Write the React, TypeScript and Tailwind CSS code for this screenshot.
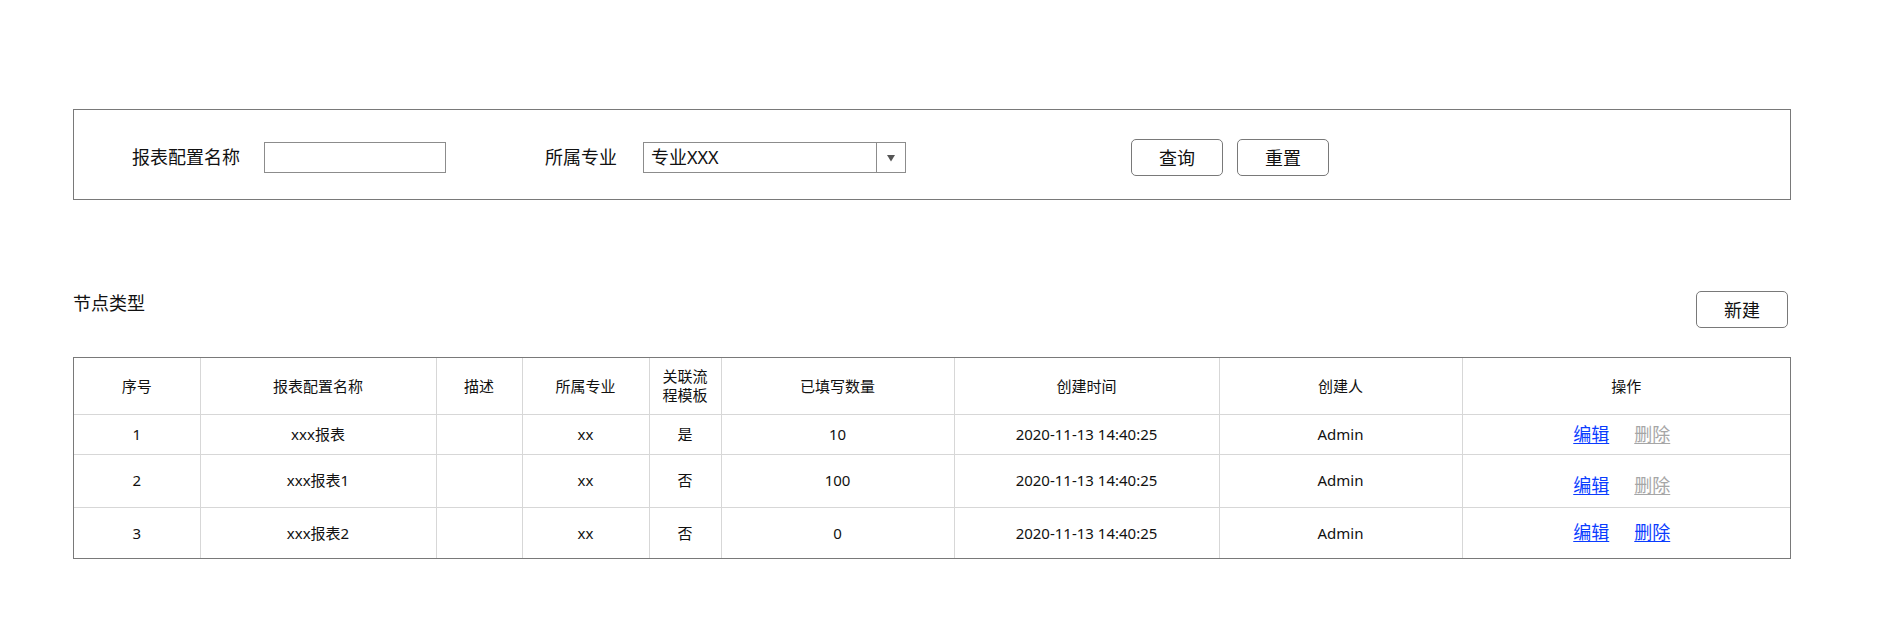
import React from 'react';

type Row = {
  no: number;
  name: string;
  desc: string;
  major: string;
  linked: string;
  filled: number;
  createdAt: string;
  creator: string;
  canDelete: boolean;
  h: string;
};

const ROWS: Row[] = [
  { no: 1, name: 'xxx报表', desc: '', major: 'xx', linked: '是', filled: 10, createdAt: '2020-11-13 14:40:25', creator: 'Admin', canDelete: false, h: 'h-[40px]' },
  { no: 2, name: 'xxx报表1', desc: '', major: 'xx', linked: '否', filled: 100, createdAt: '2020-11-13 14:40:25', creator: 'Admin', canDelete: false, h: 'h-[53px]' },
  { no: 3, name: 'xxx报表2', desc: '', major: 'xx', linked: '否', filled: 0, createdAt: '2020-11-13 14:40:25', creator: 'Admin', canDelete: true, h: 'h-[51px]' },
];

const cell = 'border-l border-[#d7d7d7] first:border-l-0 text-center align-middle p-0';

function Btn({ children }: { children: React.ReactNode }) {
  return (
    <button className="w-[92px] h-[37px] rounded-[5px] border border-[#797979] bg-white text-[18px] leading-none text-[#111]">
      {children}
    </button>
  );
}

export default function App() {
  return (
    <div
      className="w-full h-[625px] bg-white text-[#111] pl-[73px] pr-[94px] pt-[109px]"
      style={{ fontFamily: '"Noto Sans", "Noto Sans CJK SC", sans-serif' }}
    >
      {/* 查询条件 */}
      <section className="h-[91px] border border-[#797979] flex items-center pt-[6px] pl-[58px] text-[18px]">
        <span className="w-[111px] whitespace-nowrap">报表配置名称</span>
        <input className="ml-[21px] w-[182px] h-[31px] border border-[#8c8c8c] outline-none px-2" />
        <span className="ml-[99px] w-[74px] whitespace-nowrap">所属专业</span>
        <div className="ml-[24px] w-[263px] h-[31px] border border-[#8c8c8c] flex">
          <span className="flex-1 pl-[7px] leading-[29px] whitespace-nowrap">专业XXX</span>
          <span className="w-[29px] border-l border-[#8c8c8c] flex items-center justify-center">
            <svg width="10" height="8" viewBox="0 0 10 8">
              <path d="M1 1h8L5 7.5z" fill="#555" />
            </svg>
          </span>
        </div>
        <div className="ml-[225px] flex gap-[14px]">
          <Btn>查询</Btn>
          <Btn>重置</Btn>
        </div>
      </section>

      {/* 列表标题 */}
      <div className="mt-[91px] flex justify-between items-start pr-[3px]">
        <h2 className="text-[18px] leading-[25px] font-normal">节点类型</h2>
        <Btn>新建</Btn>
      </div>

      {/* 列表 */}
      <div className="mt-[29px] border border-[#797979]">
        <table className="w-full table-fixed border-collapse text-[15px]">
          <colgroup>
            <col className="w-[126px]" />
            <col className="w-[236px]" />
            <col className="w-[86px]" />
            <col className="w-[127px]" />
            <col className="w-[72px]" />
            <col className="w-[233px]" />
            <col className="w-[265px]" />
            <col className="w-[243px]" />
            <col />
          </colgroup>
          <thead>
            <tr className="h-[56px]">
              <th className={`${cell} font-normal`}>序号</th>
              <th className={`${cell} font-normal`}>报表配置名称</th>
              <th className={`${cell} font-normal`}>描述</th>
              <th className={`${cell} font-normal`}>所属专业</th>
              <th className={`${cell} font-normal leading-[19px] px-[7px]`}>关联流程模板</th>
              <th className={`${cell} font-normal`}>已填写数量</th>
              <th className={`${cell} font-normal`}>创建时间</th>
              <th className={`${cell} font-normal`}>创建人</th>
              <th className={`${cell} font-normal`}>操作</th>
            </tr>
          </thead>
          <tbody>
            {ROWS.map((r) => (
              <tr key={r.no} className={`${r.h} border-t border-[#d7d7d7]`}>
                <td className={cell}>{r.no}</td>
                <td className={cell}>{r.name}</td>
                <td className={cell}>{r.desc}</td>
                <td className={cell}>{r.major}</td>
                <td className={cell}>{r.linked}</td>
                <td className={cell}>{r.filled}</td>
                <td className={cell}>{r.createdAt}</td>
                <td className={cell}>{r.creator}</td>
                <td className={cell}>
                  <div className={`flex justify-center gap-[25px] pr-[9px] text-[18px] ${r.no === 2 ? 'pt-[10px]' : ''}`}>
                    <a href="#" className="text-[#0a3cff] underline underline-offset-2">编辑</a>
                    <a href="#" className={`underline underline-offset-2 ${r.canDelete ? 'text-[#0a3cff]' : 'text-[#a6a6a6]'}`}>删除</a>
                  </div>
                </td>
              </tr>
            ))}
          </tbody>
        </table>
      </div>
    </div>
  );
}
